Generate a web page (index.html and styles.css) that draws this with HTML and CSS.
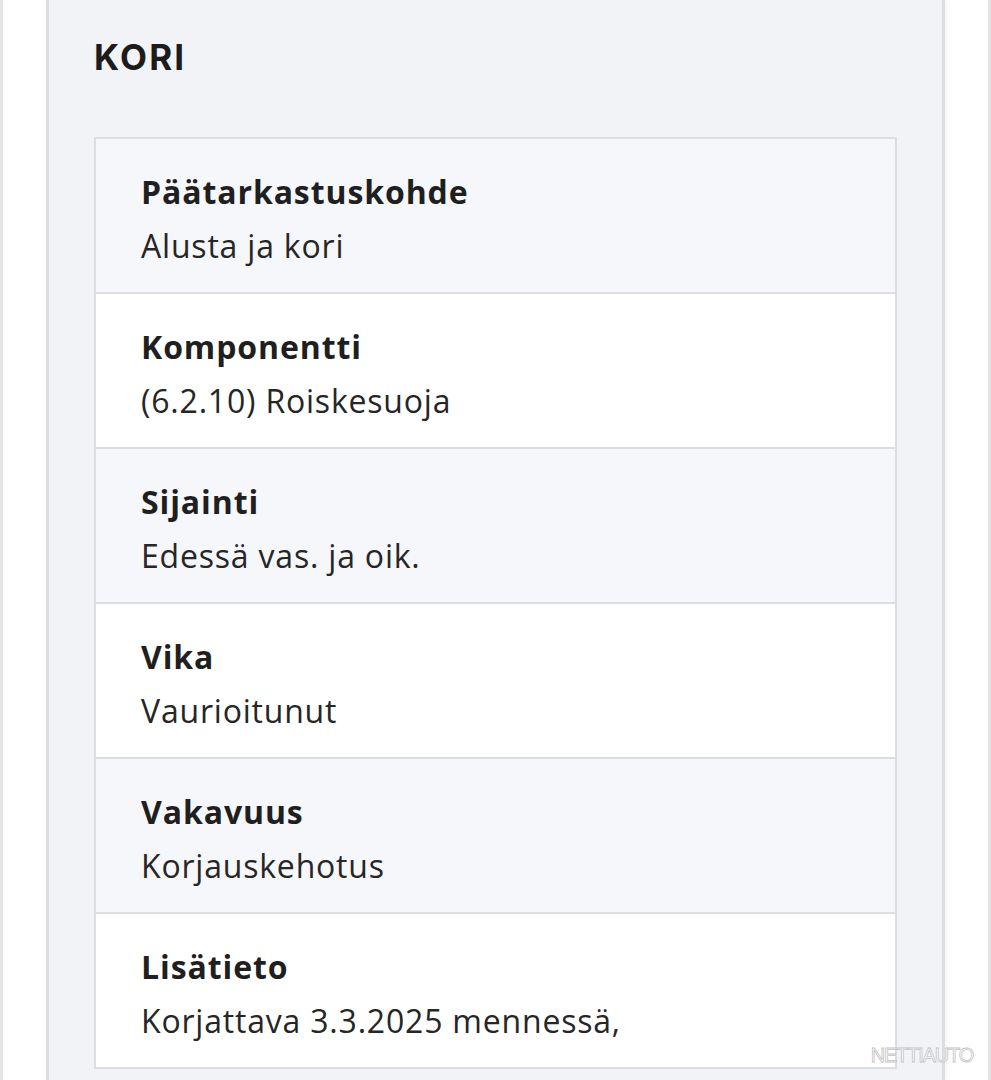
FILE: index.html
```html
<!DOCTYPE html>
<html lang="fi">
<head>
<meta charset="utf-8">
<title>Kori</title>
<link rel="stylesheet" href="styles.css">
</head>
<body>
<div class="page">
  <section class="panel">
    <h2 class="panel-title">KORI</h2>
    <div class="details">
      <div class="row">
        <div class="label">Päätarkastuskohde</div>
        <div class="value">Alusta ja kori</div>
      </div>
      <div class="row">
        <div class="label">Komponentti</div>
        <div class="value">(6.2.10) Roiskesuoja</div>
      </div>
      <div class="row">
        <div class="label">Sijainti</div>
        <div class="value">Edessä vas. ja oik.</div>
      </div>
      <div class="row">
        <div class="label">Vika</div>
        <div class="value">Vaurioitunut</div>
      </div>
      <div class="row">
        <div class="label">Vakavuus</div>
        <div class="value">Korjauskehotus</div>
      </div>
      <div class="row">
        <div class="label">Lisätieto</div>
        <div class="value">Korjattava 3.3.2025 mennessä,</div>
      </div>
    </div>
  </section>
  <div class="watermark">NETTIAUTO</div>
</div>
</body>
</html>
```

FILE: styles.css
```css
html, body {
  margin: 0;
  padding: 0;
  background: #ffffff;
}

body {
  font-family: "Open Sans", "Noto Sans", sans-serif;
  color: #222222;
  height: 1080px;
  overflow: hidden;
}

.page {
  position: relative;
  box-sizing: border-box;
  height: 1080px;
  border-left: 3px solid #e4e4e6;
  border-right: 3px solid #e4e4e6;
  padding: 0 43px;
  background: #ffffff;
}

.panel {
  box-sizing: border-box;
  height: 1080px;
  background: #f2f3f7;
  border-left: 3px solid #dcdde1;
  border-right: 3px solid #dcdde1;
  box-shadow: 3px 0 6px rgba(0, 0, 0, 0.04);
  padding: 36px 45px 0;
}

.panel-title {
  margin: 0 0 59px;
  font-family: Inter, "Open Sans", sans-serif;
  font-weight: 700;
  font-size: 35px;
  line-height: 42px;
  color: #1c1c1c;
  letter-spacing: 2.2px;
}

.details {
  border: 2px solid #dcdde1;
  background: #ffffff;
}

.row {
  box-sizing: border-box;
  height: 155px;
  padding: 26px 45px 0;
  border-bottom: 2px solid #dcdde1;
  background: #ffffff;
}

.row:last-child {
  height: 153px;
  border-bottom: none;
}

.row:nth-child(odd) {
  background: #f6f7fa;
}

.label {
  font-weight: 700;
  font-size: 32px;
  line-height: 54px;
  letter-spacing: 0.9px;
  color: #1f1f1f;
}

.value {
  font-weight: 400;
  font-size: 32px;
  line-height: 54px;
  letter-spacing: 0.8px;
  color: #262626;
}

.watermark {
  position: absolute;
  right: 15px;
  bottom: 15px;
  font-family: "Liberation Sans", Arial, sans-serif;
  font-size: 20px;
  line-height: 20px;
  letter-spacing: -1.2px;
  color: #ffffff;
  -webkit-text-stroke: 0.8px #c4c4c4;
}
```
